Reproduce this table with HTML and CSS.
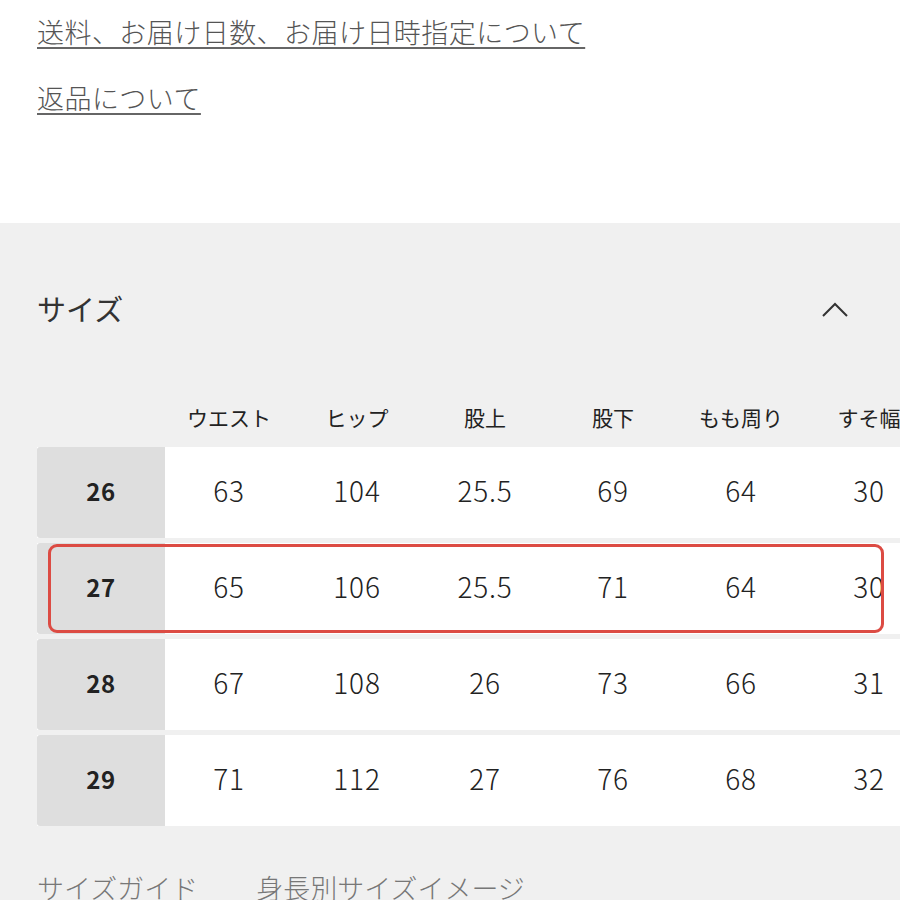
FILE: index.html
```html
<!DOCTYPE html>
<html lang="ja">
<head>
<meta charset="utf-8">
<link rel="stylesheet" href="styles.css">
</head>
<body>
<div class="links">
  <a class="link" href="#">送料、お届け日数、お届け日時指定について</a>
  <a class="link" href="#">返品について</a>
</div>
<section class="size">
  <div class="size-head">
    <span class="size-title">サイズ</span>
    <svg class="chev" width="28" height="16" viewBox="0 0 28 16"><path d="M2 15 L14 3 L26 15" fill="none" stroke="#333" stroke-width="2"/></svg>
  </div>
  <div class="table">
    <div class="row head">
      <div class="cell key"></div>
      <div class="cell">ウエスト</div>
      <div class="cell">ヒップ</div>
      <div class="cell">股上</div>
      <div class="cell">股下</div>
      <div class="cell">もも周り</div>
      <div class="cell">すそ幅</div>
    </div>
    <div class="rows">
      <div class="row data"><div class="cell key">26</div><div class="cell">63</div><div class="cell">104</div><div class="cell">25.5</div><div class="cell">69</div><div class="cell">64</div><div class="cell">30</div></div>
      <div class="row data"><div class="cell key">27</div><div class="cell">65</div><div class="cell">106</div><div class="cell">25.5</div><div class="cell">71</div><div class="cell">64</div><div class="cell">30</div></div>
      <div class="row data"><div class="cell key">28</div><div class="cell">67</div><div class="cell">108</div><div class="cell">26</div><div class="cell">73</div><div class="cell">66</div><div class="cell">31</div></div>
      <div class="row data"><div class="cell key">29</div><div class="cell">71</div><div class="cell">112</div><div class="cell">27</div><div class="cell">76</div><div class="cell">68</div><div class="cell">32</div></div>
      <div class="highlight"></div>
    </div>
  </div>
  <div class="guides">
    <span class="guide">サイズガイド</span>
    <span class="guide">身長別サイズイメージ</span>
  </div>
</section>
</body>
</html>
```
FILE: styles.css
```css
* { box-sizing: border-box; }
html, body { margin: 0; padding: 0; }
body {
  width: 900px;
  height: 900px;
  overflow: hidden;
  background: #fff;
  font-family: "Noto Sans CJK JP", "Noto Sans", sans-serif;
  color: #222;
}
.links {
  height: 223px;
  padding: 12px 0 0 37px;
  display: flex;
  flex-direction: column;
  align-items: flex-start;
  gap: 26px;
}
.link {
  font-size: 27px;
  font-weight: 300;
  line-height: 40px;
  letter-spacing: 0.45px;
  color: #555;
  text-decoration: underline;
  text-decoration-color: #666;
  text-decoration-thickness: 2px;
  text-underline-offset: 4px;
}
.size {
  background: #f0f0f0;
  height: 677px;
  padding-left: 37px;
  overflow: hidden;
}
.size-head {
  height: 170px;
  display: flex;
  align-items: center;
  justify-content: space-between;
  padding-right: 51px;
}
.size-title {
  font-size: 29px;
  color: #333;
  line-height: 40px;
}
.chev { margin-top: 2px; }
.table { width: 896px; }
.row { display: flex; }
.cell {
  width: 128px;
  flex: none;
  display: flex;
  align-items: center;
  justify-content: center;
}
.head { height: 54px; align-items: flex-start; }
.head .cell { font-size: 21px; color: #222; height: 48px; }
.rows {
  position: relative;
  display: flex;
  flex-direction: column;
  gap: 5px;
}
.data { height: 91px; background: #fff; }
.data .cell {
  font-size: 28px;
  font-weight: 300;
  color: #222;
  letter-spacing: 0.8px;
  padding-bottom: 5px;
}
.data .cell.key {
  background: #dedede;
  font-weight: 700;
  font-size: 24px;
  letter-spacing: 0.5px;
  border-radius: 3px 0 0 3px;
}
.highlight {
  position: absolute;
  left: 11px;
  top: 97px;
  width: 836px;
  height: 89px;
  border: 3px solid #dc4b43;
  border-radius: 9px;
}
.guides {
  padding-top: 42px;
  display: flex;
  gap: 58px;
}
.guide {
  font-size: 27px;
  font-weight: 300;
  color: #777;
  line-height: 40px;
}
```
